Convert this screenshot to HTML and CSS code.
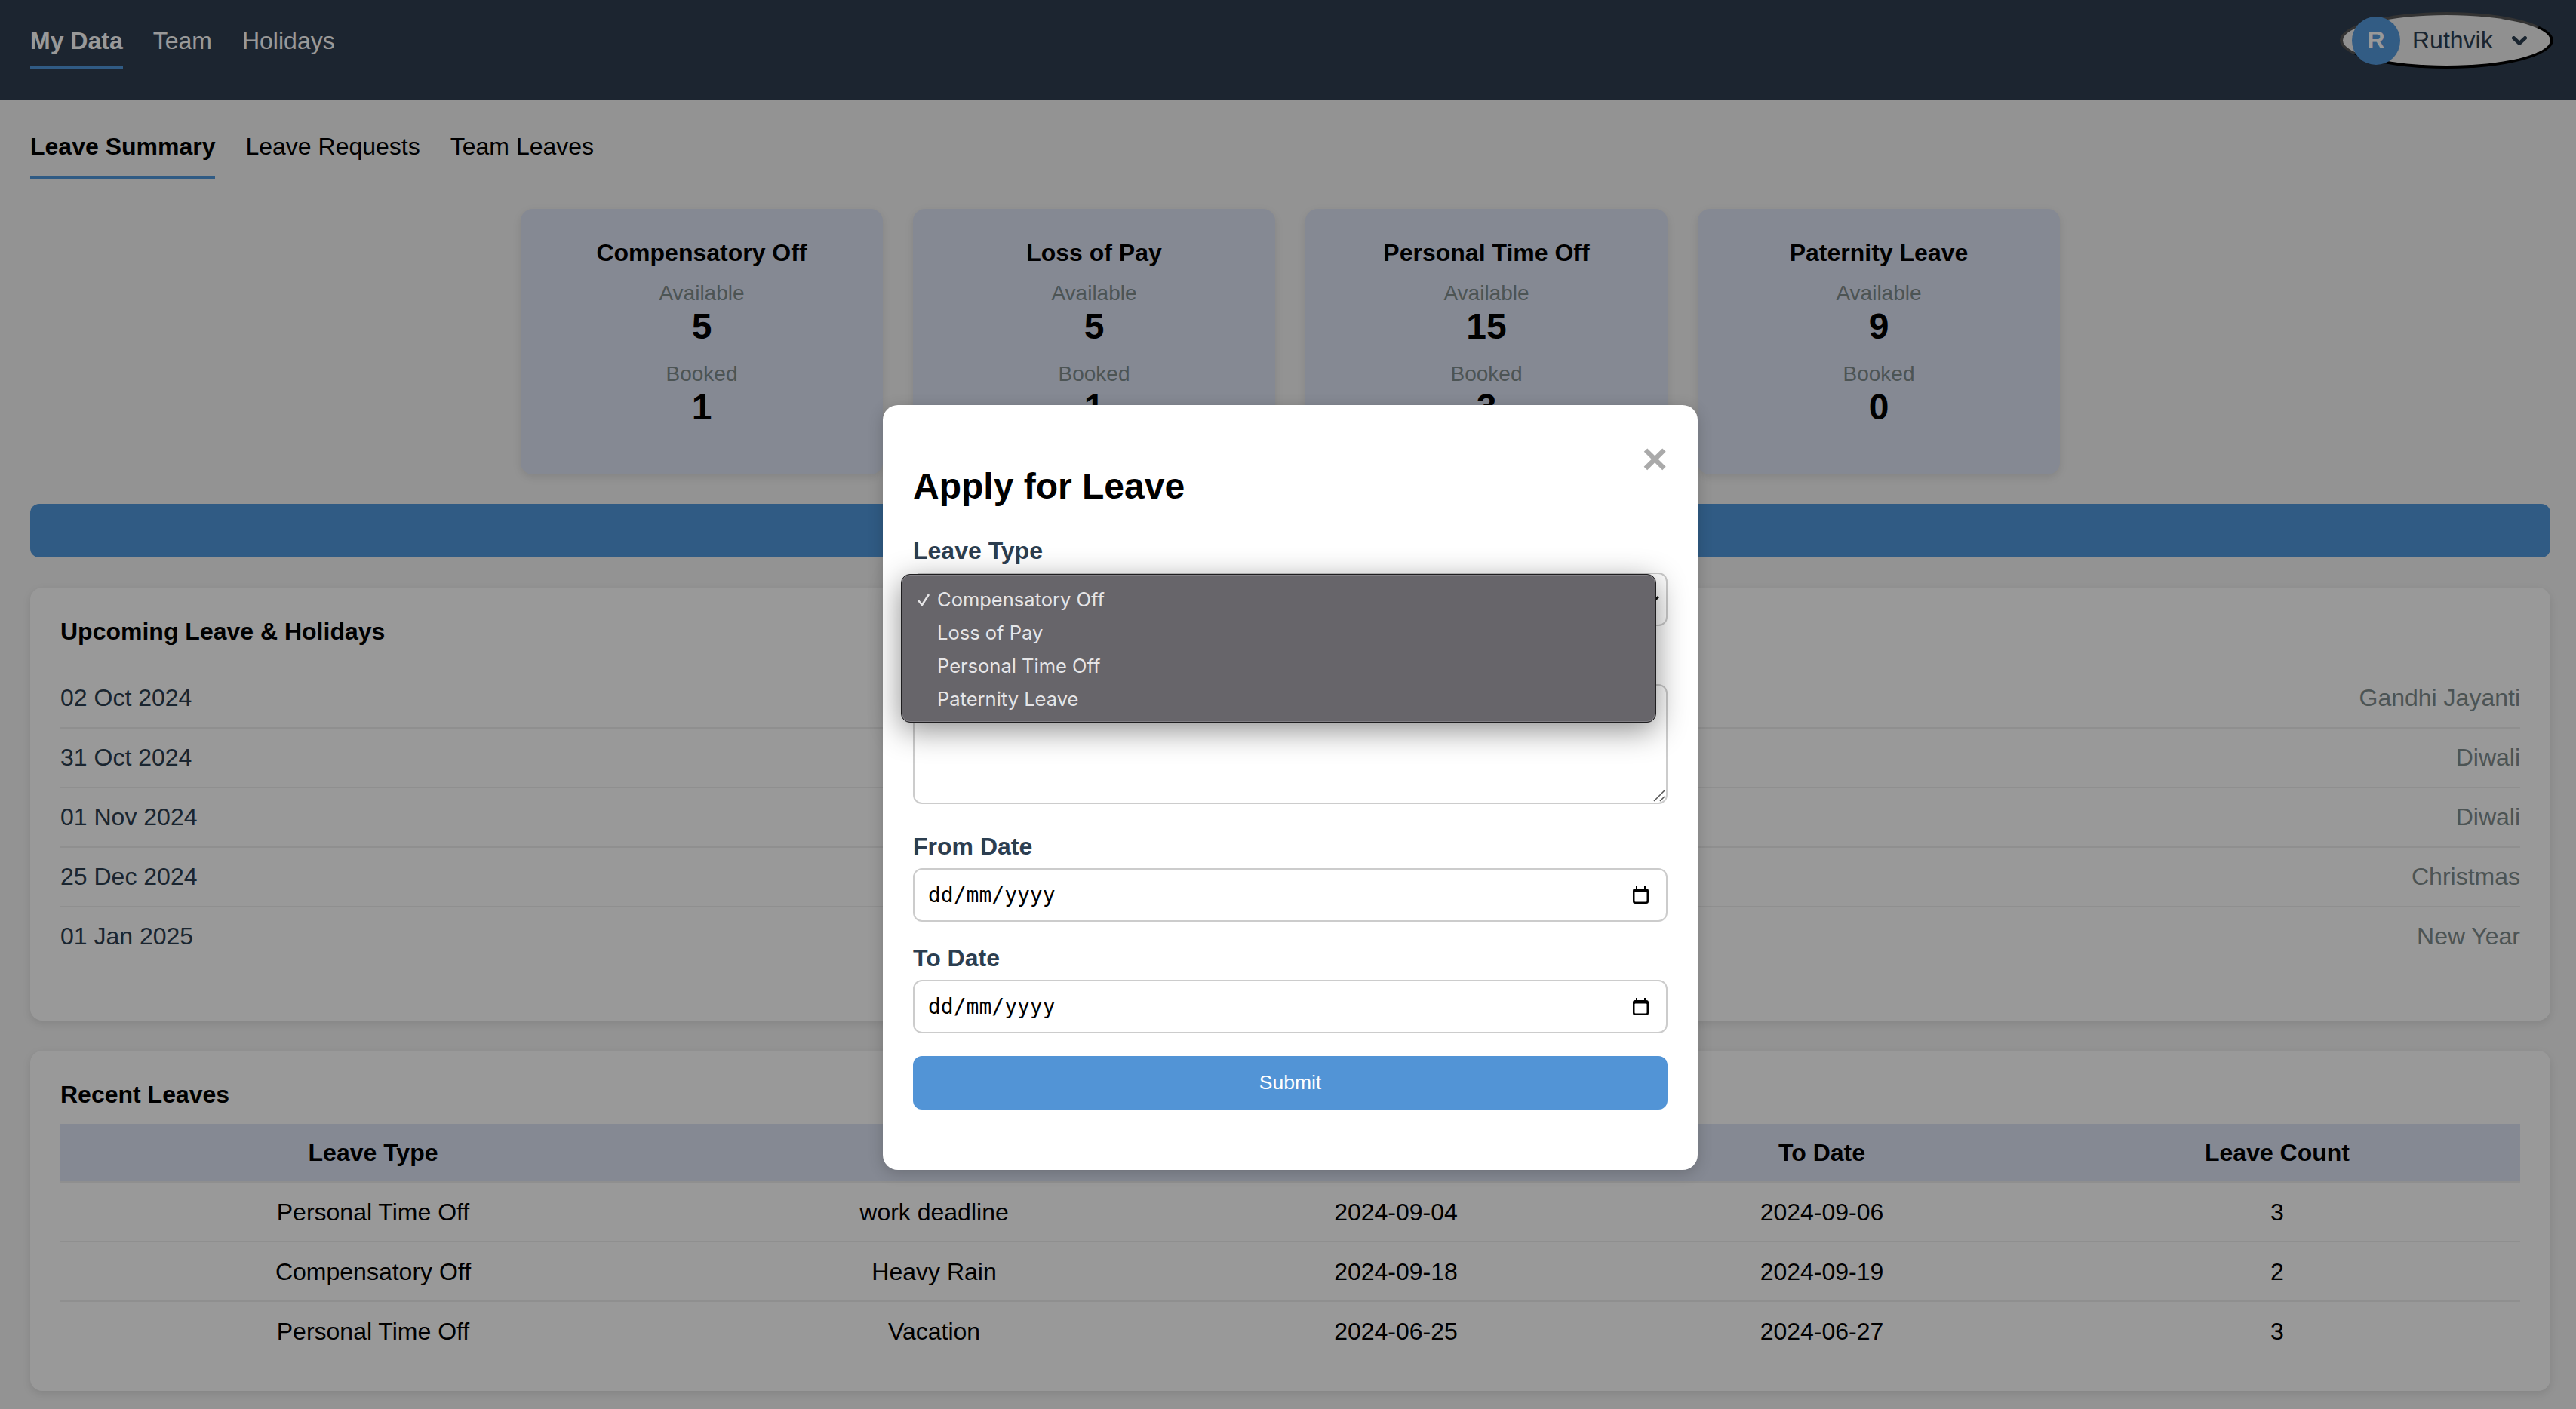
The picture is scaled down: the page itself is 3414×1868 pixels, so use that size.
FILE: index.html
```html
<!DOCTYPE html>
<html lang="en">
<head>
<meta charset="utf-8">
<title>Leave Summary</title>
<link rel="stylesheet" href="styles.css">
</head>
<body>
<div class="app">
  <header class="navbar">
    <nav class="nav-links">
      <a class="nav-link active">My Data</a>
      <a class="nav-link">Team</a>
      <a class="nav-link">Holidays</a>
    </nav>
    <button class="user-pill">
      <span class="avatar">R</span>
      <span class="user-name">Ruthvik</span>
      <svg class="user-chevron" viewBox="0 0 20 12"><path d="M2.5 2.5 10 9.5 17.5 2.5"/></svg>
    </button>
  </header>
  <main class="content">
    <nav class="tabs">
      <a class="tab active">Leave Summary</a>
      <a class="tab">Leave Requests</a>
      <a class="tab">Team Leaves</a>
    </nav>
    <section class="cards">
      <article class="card">
        <h3 class="card-title">Compensatory Off</h3>
        <div class="stat"><div class="stat-label">Available</div><div class="stat-value">5</div></div>
        <div class="stat"><div class="stat-label">Booked</div><div class="stat-value">1</div></div>
      </article>
      <article class="card">
        <h3 class="card-title">Loss of Pay</h3>
        <div class="stat"><div class="stat-label">Available</div><div class="stat-value">5</div></div>
        <div class="stat"><div class="stat-label">Booked</div><div class="stat-value">1</div></div>
      </article>
      <article class="card">
        <h3 class="card-title">Personal Time Off</h3>
        <div class="stat"><div class="stat-label">Available</div><div class="stat-value">15</div></div>
        <div class="stat"><div class="stat-label">Booked</div><div class="stat-value">3</div></div>
      </article>
      <article class="card">
        <h3 class="card-title">Paternity Leave</h3>
        <div class="stat"><div class="stat-label">Available</div><div class="stat-value">9</div></div>
        <div class="stat"><div class="stat-label">Booked</div><div class="stat-value">0</div></div>
      </article>
    </section>
    <button class="apply-bar">Apply for Leave</button>
    <section class="panel">
      <h3 class="panel-title upcoming-title">Upcoming Leave &amp; Holidays</h3>
      <ul class="holiday-list">
        <li class="holiday"><span class="holiday-date">02 Oct 2024</span><span class="holiday-name">Gandhi Jayanti</span></li>
        <li class="holiday"><span class="holiday-date">31 Oct 2024</span><span class="holiday-name">Diwali</span></li>
        <li class="holiday"><span class="holiday-date">01 Nov 2024</span><span class="holiday-name">Diwali</span></li>
        <li class="holiday"><span class="holiday-date">25 Dec 2024</span><span class="holiday-name">Christmas</span></li>
        <li class="holiday"><span class="holiday-date">01 Jan 2025</span><span class="holiday-name">New Year</span></li>
      </ul>
    </section>
    <section class="panel recent">
      <h3 class="panel-title recent-title">Recent Leaves</h3>
      <table class="leaves">
        <colgroup><col class="col-a"><col class="col-b"><col class="col-c"><col class="col-d"><col class="col-e"></colgroup>
        <thead><tr><th>Leave Type</th><th>Reason</th><th>From Date</th><th>To Date</th><th>Leave Count</th></tr></thead>
        <tbody>
          <tr><td>Personal Time Off</td><td>work deadline</td><td>2024-09-04</td><td>2024-09-06</td><td>3</td></tr>
          <tr><td>Compensatory Off</td><td>Heavy Rain</td><td>2024-09-18</td><td>2024-09-19</td><td>2</td></tr>
          <tr><td>Personal Time Off</td><td>Vacation</td><td>2024-06-25</td><td>2024-06-27</td><td>3</td></tr>
        </tbody>
      </table>
    </section>
  </main>

  <div class="overlay">
    <div class="modal">
      <span class="close">×</span>
      <h2 class="modal-title">Apply for Leave</h2>
      <form class="form">
        <div class="group">
          <label class="label">Leave Type</label>
          <div class="field">
            <div class="fake-select"></div>
            <svg class="select-chevron" viewBox="0 0 20 12"><path d="M2 2 10 10 18 2"/></svg>
            <div class="popup">
              <div class="option"><svg class="check" viewBox="0 0 18 18"><path d="M2 10 7 16 16 2"/></svg>Compensatory Off</div>
              <div class="option">Loss of Pay</div>
              <div class="option">Personal Time Off</div>
              <div class="option">Paternity Leave</div>
            </div>
          </div>
        </div>
        <div class="group group-text">
          <div class="label-spacer"></div>
          <div class="field">
            <textarea class="textarea"></textarea>
            <svg class="resizer" viewBox="0 0 16 16"><path d="M1 15 15 1M9 15 15 9"/></svg>
          </div>
        </div>
        <div class="group">
          <label class="label">From Date</label>
          <div class="date-input">
            <span class="date-text">dd/mm/yyyy</span>
            <svg class="calendar" viewBox="0 0 21 23"><path class="cal-fill" d="M4 0h2v3h9V0h2v3h1a3 3 0 0 1 3 3v14a3 3 0 0 1-3 3H3a3 3 0 0 1-3-3V6a3 3 0 0 1 3-3h1z"/><rect class="cal-face" x="2.5" y="7.5" width="16" height="13" rx="1"/></svg>
          </div>
        </div>
        <div class="group">
          <label class="label">To Date</label>
          <div class="date-input">
            <span class="date-text">dd/mm/yyyy</span>
            <svg class="calendar" viewBox="0 0 21 23"><path class="cal-fill" d="M4 0h2v3h9V0h2v3h1a3 3 0 0 1 3 3v14a3 3 0 0 1-3 3H3a3 3 0 0 1-3-3V6a3 3 0 0 1 3-3h1z"/><rect class="cal-face" x="2.5" y="7.5" width="16" height="13" rx="1"/></svg>
          </div>
        </div>
        <button class="submit" type="button">Submit</button>
      </form>
    </div>
  </div>
</div>
</body>
</html>
```

FILE: styles.css
```css
* { box-sizing: border-box; }
html, body { margin: 0; padding: 0; height: 1868px; overflow: hidden; }
body { background: #f5f5f5; font-family: "Liberation Sans", Arial, sans-serif; font-size: 32px; line-height: 37px; color: #000; }
.app { position: relative; width: 3420px; height: 1868px; overflow: hidden; }

.navbar { display: flex; justify-content: space-between; align-items: flex-start; height: 132px; padding: 0 36px 0 40px; background: #2f3e50; }
.nav-links { display: flex; gap: 40px; padding-top: 36px; }
.nav-link { padding-bottom: 15px; border-bottom: 4px solid transparent; color: #fff; height: 56px; }
.nav-link.active { font-weight: 700; border-bottom-color: #5198dc; }

.user-pill { display: flex; align-items: center; margin: 16px 0 0; width: 283px; height: 75px; padding: 0 0 0 12px; background: #f0f0f0; border: 4px solid; border-color: #555 #000 #000 #555; border-radius: 50%; font: inherit; color: #2c3e50; }
.avatar { flex: none; display: flex; align-items: center; justify-content: center; width: 64px; height: 64px; border-radius: 50%; background: #5499dc; color: #fff; font-weight: 700; }
.user-name { margin-left: 16px; }
.user-chevron { flex: none; width: 20px; height: 12px; margin-left: 25px; fill: none; stroke: #2c3e50; stroke-width: 5; stroke-linecap: round; stroke-linejoin: round; }

.content { padding: 44px 40px 0; }
.tabs { display: flex; gap: 40px; }
.tab { padding-bottom: 20px; border-bottom: 4px solid transparent; height: 61px; }
.tab.active { font-weight: 700; border-bottom-color: #5198dc; }

.cards { display: flex; justify-content: center; gap: 40px; margin-top: 40px; }
.card { width: 480px; height: 352px; padding-top: 40px; background: #dee4f6; border-radius: 16px; box-shadow: 0 4px 12px rgba(0,0,0,.1); text-align: center; }
.card-title { margin: 0 0 19px; font-size: 32px; line-height: 37px; font-weight: 700; }
.stat { margin-bottom: 20px; }
.stat-label { font-size: 28px; line-height: 32px; color: #7f8c8d; }
.stat-value { font-size: 48px; line-height: 55px; font-weight: 700; }

.apply-bar { display: block; width: 100%; height: 71px; margin-top: 39px; border: 0; border-radius: 12px; background: #5198dc; color: #fff; font: inherit; }

.panel { margin-top: 40px; padding: 40px 40px 0; background: #fff; border-radius: 16px; box-shadow: 0 4px 12px rgba(0,0,0,.1); height: 574px; }
.panel-title { margin: 0; font-size: 32px; line-height: 37px; font-weight: 700; }
.upcoming-title { margin-bottom: 31px; }
.recent-title { margin-bottom: 20px; }
.holiday-list { list-style: none; margin: 0; padding: 0; }
.holiday { display: flex; justify-content: space-between; height: 79px; padding: 20px 0; border-bottom: 2px solid #eee; }
.holiday:last-child { border-bottom: 0; }
.holiday-date { color: #2c3e50; }
.holiday-name { color: #7f8c8d; }
.recent { height: 451px; }

.leaves { width: 3260px; border-collapse: collapse; table-layout: fixed; }
.col-a { width: 829px; }
.col-b { width: 658px; }
.col-c { width: 566px; }
.col-d { width: 563px; }
.col-e { width: 644px; }
.leaves th { height: 77px; padding: 0; background: #dee4f6; font-weight: 700; text-align: center; }
.leaves thead tr { border-bottom: 2px solid #eee; }
.leaves td { height: 79px; padding: 1px 0 0; text-align: center; border-bottom: 2px solid #eee; }
.leaves tbody tr:last-child td { border-bottom: 0; }

.overlay { position: absolute; inset: 0; display: flex; justify-content: center; align-items: flex-start; padding-top: 537px; background: rgba(0,0,0,.4); }
.modal { position: relative; width: 1080px; height: 1014px; padding: 80px 40px 0; background: #fff; border-radius: 20px; box-shadow: 0 4px 20px rgba(0,0,0,.2); }
.close { position: absolute; top: 42px; right: 40px; font-size: 58px; line-height: 58px; font-weight: 700; color: #aaa; }
.modal-title { margin: 0 0 40px; font-size: 48px; line-height: 55px; font-weight: 700; }
.group { margin-bottom: 30px; }
.group-text { margin-bottom: 38px; }
.label { display: block; margin-bottom: 10px; font-weight: 700; color: #2c3e50; }
.label-spacer { height: 47px; }
.field { position: relative; }
.fake-select { height: 71px; border: 2px solid #ccc; border-radius: 12px; background: #fff; }
.select-chevron { position: absolute; right: 10px; top: 30px; width: 20px; height: 12px; fill: none; stroke: #111; stroke-width: 3; }
.popup { position: absolute; z-index: 5; top: 2px; left: -16px; width: 1001px; height: 197px; padding: 11px 0 9px; background: #67656a; border: 1px solid #1f1e20; border-radius: 12px; box-shadow: inset 0 0 0 1px #828085, 0 10px 40px rgba(0,0,0,.45); font-family: "Inter", "Liberation Sans", sans-serif; font-size: 25.5px; line-height: 44px; color: #e6e5e7; }
.option { position: relative; padding-left: 47px; }
.check { position: absolute; left: 20px; top: 13px; width: 18px; height: 18px; fill: none; stroke: #e6e5e7; stroke-width: 2.6; }
.textarea { display: block; width: 100%; height: 159px; padding: 18px; border: 2px solid #ccc; border-radius: 12px; background: #fff; font: inherit; resize: none; }
.resizer { position: absolute; right: 3px; bottom: 3px; width: 16px; height: 16px; fill: none; stroke: #555; stroke-width: 1.5; }
.date-input { display: flex; justify-content: space-between; align-items: center; height: 71px; padding: 0 23px 0 18px; border: 2px solid #ccc; border-radius: 12px; }
.date-text { font-family: "DejaVu Sans Mono", "Liberation Mono", monospace; font-size: 28px; color: #000; }
.calendar { width: 21px; height: 23px; }
.cal-fill { fill: #000; }
.cal-face { fill: #fff; }
.submit { display: block; width: 100%; height: 71px; border: 0; border-radius: 12px; background: #5294d6; color: #fff; font-family: inherit; font-size: 26.5px; }
```
